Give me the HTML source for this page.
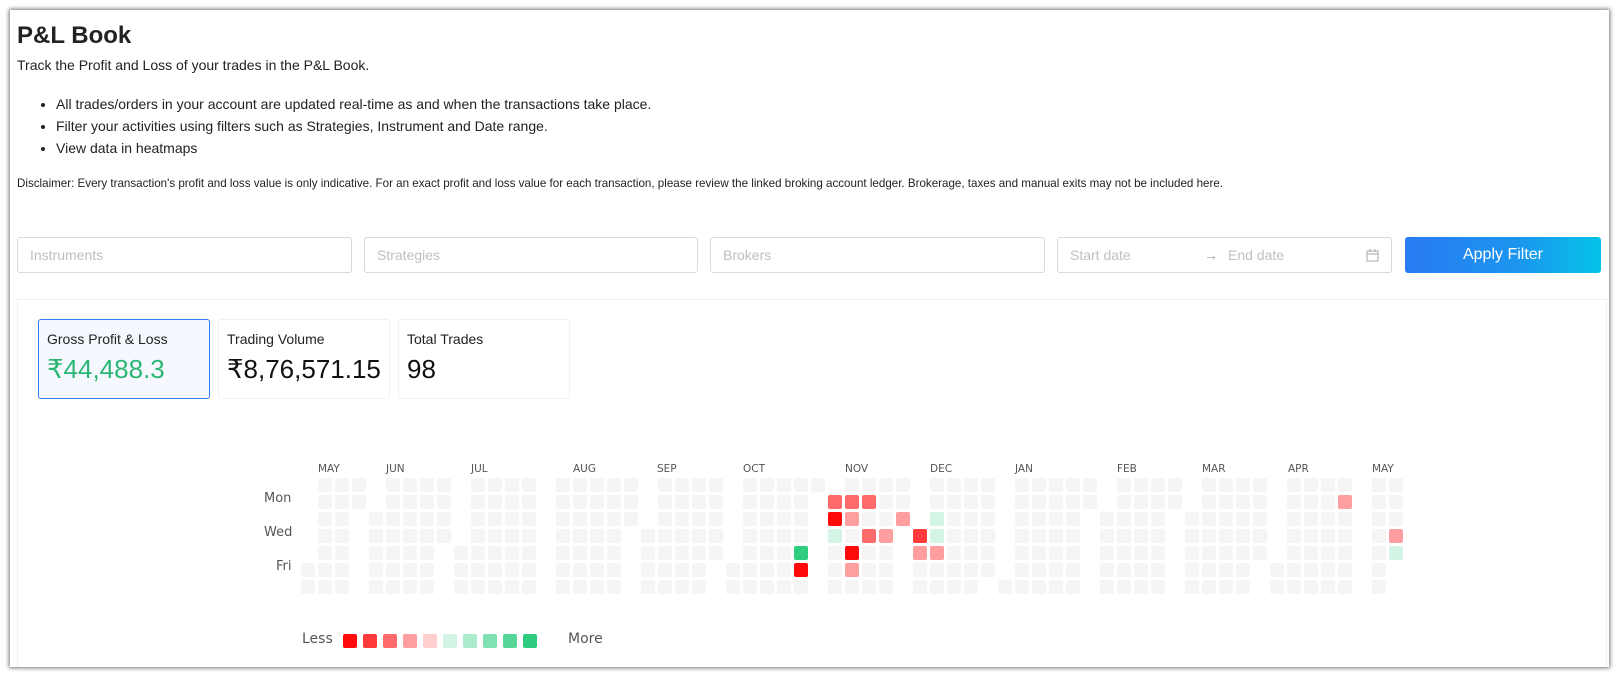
<!DOCTYPE html>
<html><head><meta charset="utf-8"><style>
html,body{margin:0;padding:0;background:#fff;width:1624px;height:683px;overflow:hidden;font-family:"Liberation Sans",sans-serif;color:#222}
.win{position:absolute;left:10px;top:10px;width:1599px;height:657px;background:#fff;box-shadow:0 0 4px 1px rgba(0,0,0,.55);overflow:hidden}
.abs{position:absolute}
h1{position:absolute;left:7px;top:12px;margin:0;font-size:24px;font-weight:bold;color:#222}
.sub{left:7px;top:47px;font-size:14px}
ul{position:absolute;left:7px;top:83px;margin:0;padding-left:39px;font-size:14px;line-height:22px}
.disc{left:7px;top:167px;font-size:11.6px}
.inp{position:absolute;top:227px;height:36px;border:1px solid #d9d9d9;border-radius:3px;box-sizing:border-box;font-size:14px;color:#bfbfbf;padding:9px 12px}
.btn{position:absolute;left:1395px;top:227px;width:196px;height:36px;border-radius:3px;background:linear-gradient(90deg,#2a7af3,#1a97ee 60%,#05c3e8);color:#fff;font-size:16px;text-align:center;line-height:36px}
.panel{position:absolute;left:7px;top:289px;width:1590px;height:400px;border:1px solid #f0f0f0;box-sizing:border-box}
.card{position:absolute;top:309px;width:172px;height:80px;border:1px solid #f0f0f0;border-radius:3px;box-sizing:border-box;background:#fff}
.card .t{position:absolute;left:8px;top:11px;font-size:14px;color:#222}
.card .v{position:absolute;left:8px;top:34px;font-size:26px;color:#111}
.hm{font-family:"DejaVu Sans",sans-serif;color:#555}
.c{position:absolute;width:14px;height:14px;border-radius:2px;background:#f5f5f5}
.ml{position:absolute;font-size:10.5px;top:453px}
.dl{position:absolute;font-size:13px;left:254px}
</style></head><body>
<div class="win">
<h1>P&amp;L Book</h1>
<div class="abs sub">Track the Profit and Loss of your trades in the P&amp;L Book.</div>
<ul><li>All trades/orders in your account are updated real-time as and when the transactions take place.</li><li>Filter your activities using filters such as Strategies, Instrument and Date range.</li><li>View data in heatmaps</li></ul>
<div class="abs disc">Disclaimer: Every transaction's profit and loss value is only indicative. For an exact profit and loss value for each transaction, please review the linked broking account ledger. Brokerage, taxes and manual exits may not be included here.</div>
<div class="inp" style="left:7px;width:335px">Instruments</div>
<div class="inp" style="left:354px;width:334px">Strategies</div>
<div class="inp" style="left:700px;width:335px">Brokers</div>
<div class="inp" style="left:1047px;width:335px">Start date<span style="position:absolute;left:146px;color:#999">→</span><span style="position:absolute;left:170px">End date</span>
<svg style="position:absolute;right:12px;top:11px" width="13" height="13" viewBox="0 0 13 13"><rect x="1" y="2" width="11" height="10" fill="none" stroke="#aaa"/><line x1="1" y1="5" x2="12" y2="5" stroke="#aaa"/><line x1="4" y1="0" x2="4" y2="3" stroke="#aaa"/><line x1="9" y1="0" x2="9" y2="3" stroke="#aaa"/></svg></div>
<div class="btn">Apply Filter</div>
<div class="panel"></div>
<div class="card" style="left:28px;border-color:#2f7cf0;background:#f5f9ff"><div class="t">Gross Profit &amp; Loss</div><div class="v" style="color:#2bb673">₹44,488.3</div></div>
<div class="card" style="left:208px"><div class="t">Trading Volume</div><div class="v">₹8,76,571.15</div></div>
<div class="card" style="left:388px"><div class="t">Total Trades</div><div class="v">98</div></div>
<div class="hm" id="hm">
<div class="dl" style="top:481px">Mon</div><div class="dl" style="top:515px">Wed</div><div class="dl" style="top:549px;left:266px">Fri</div>
<div class="ml" style="left:308px">MAY</div><div class="ml" style="left:376px">JUN</div><div class="ml" style="left:461px">JUL</div><div class="ml" style="left:563px">AUG</div><div class="ml" style="left:647px">SEP</div><div class="ml" style="left:733px">OCT</div><div class="ml" style="left:835px">NOV</div><div class="ml" style="left:920px">DEC</div><div class="ml" style="left:1005px">JAN</div><div class="ml" style="left:1107px">FEB</div><div class="ml" style="left:1192px">MAR</div><div class="ml" style="left:1278px">APR</div><div class="ml" style="left:1362px">MAY</div>
<div class="abs" style="left:292px;top:621px;font-size:14px">Less</div>
<div class="abs" style="left:558px;top:621px;font-size:14px">More</div>
</div>
</div>
<script>
var hm=document.getElementById('hm');
var M=[[0,5,18],[4,2,30],[9,4,31],[15,0,31],[20,3,30],[25,5,31],[31,1,30],[36,3,31],[41,6,31],[47,2,28],[52,2,31],[57,5,30],[63,0,12]];
var R='#ff0b0b',R2='#ff3b3b',R3='#ff6b6b',P='#ff9e9e',G='#2ecc7f',LG='#d4f5e5';
var col={'29,4':G,'29,5':R,'31,1':R3,'32,1':R3,'33,1':R3,'31,2':R,'32,2':P,'35,2':P,'31,3':LG,'33,3':R3,'34,3':P,'36,3':R2,'32,4':R,'32,5':P,'37,2':LG,'37,3':LG,'36,4':P,'37,4':P,'61,1':P,'64,3':P,'64,4':LG};
var h='';
M.forEach(function(m){var c=m[0],r=m[1];for(var i=0;i<m[2];i++){var k=c+','+r;h+='<div class="c" style="left:'+(291+17*c)+'px;top:'+(468+17*r)+'px'+(col[k]?';background:'+col[k]:'')+'"></div>';r++;if(r>6){r=0;c++;}}});
var L=['#ff0b0b','#ff3b3b','#ff6b6b','#ff9e9e','#ffcece','#d4f5e5','#aaebcb','#80e1b2','#56d798','#2ecc7f'];
L.forEach(function(x,i){h+='<div class="c" style="left:'+(333+20*i)+'px;top:624px;background:'+x+'"></div>';});
hm.insertAdjacentHTML('beforeend',h);
</script>
</body></html>
